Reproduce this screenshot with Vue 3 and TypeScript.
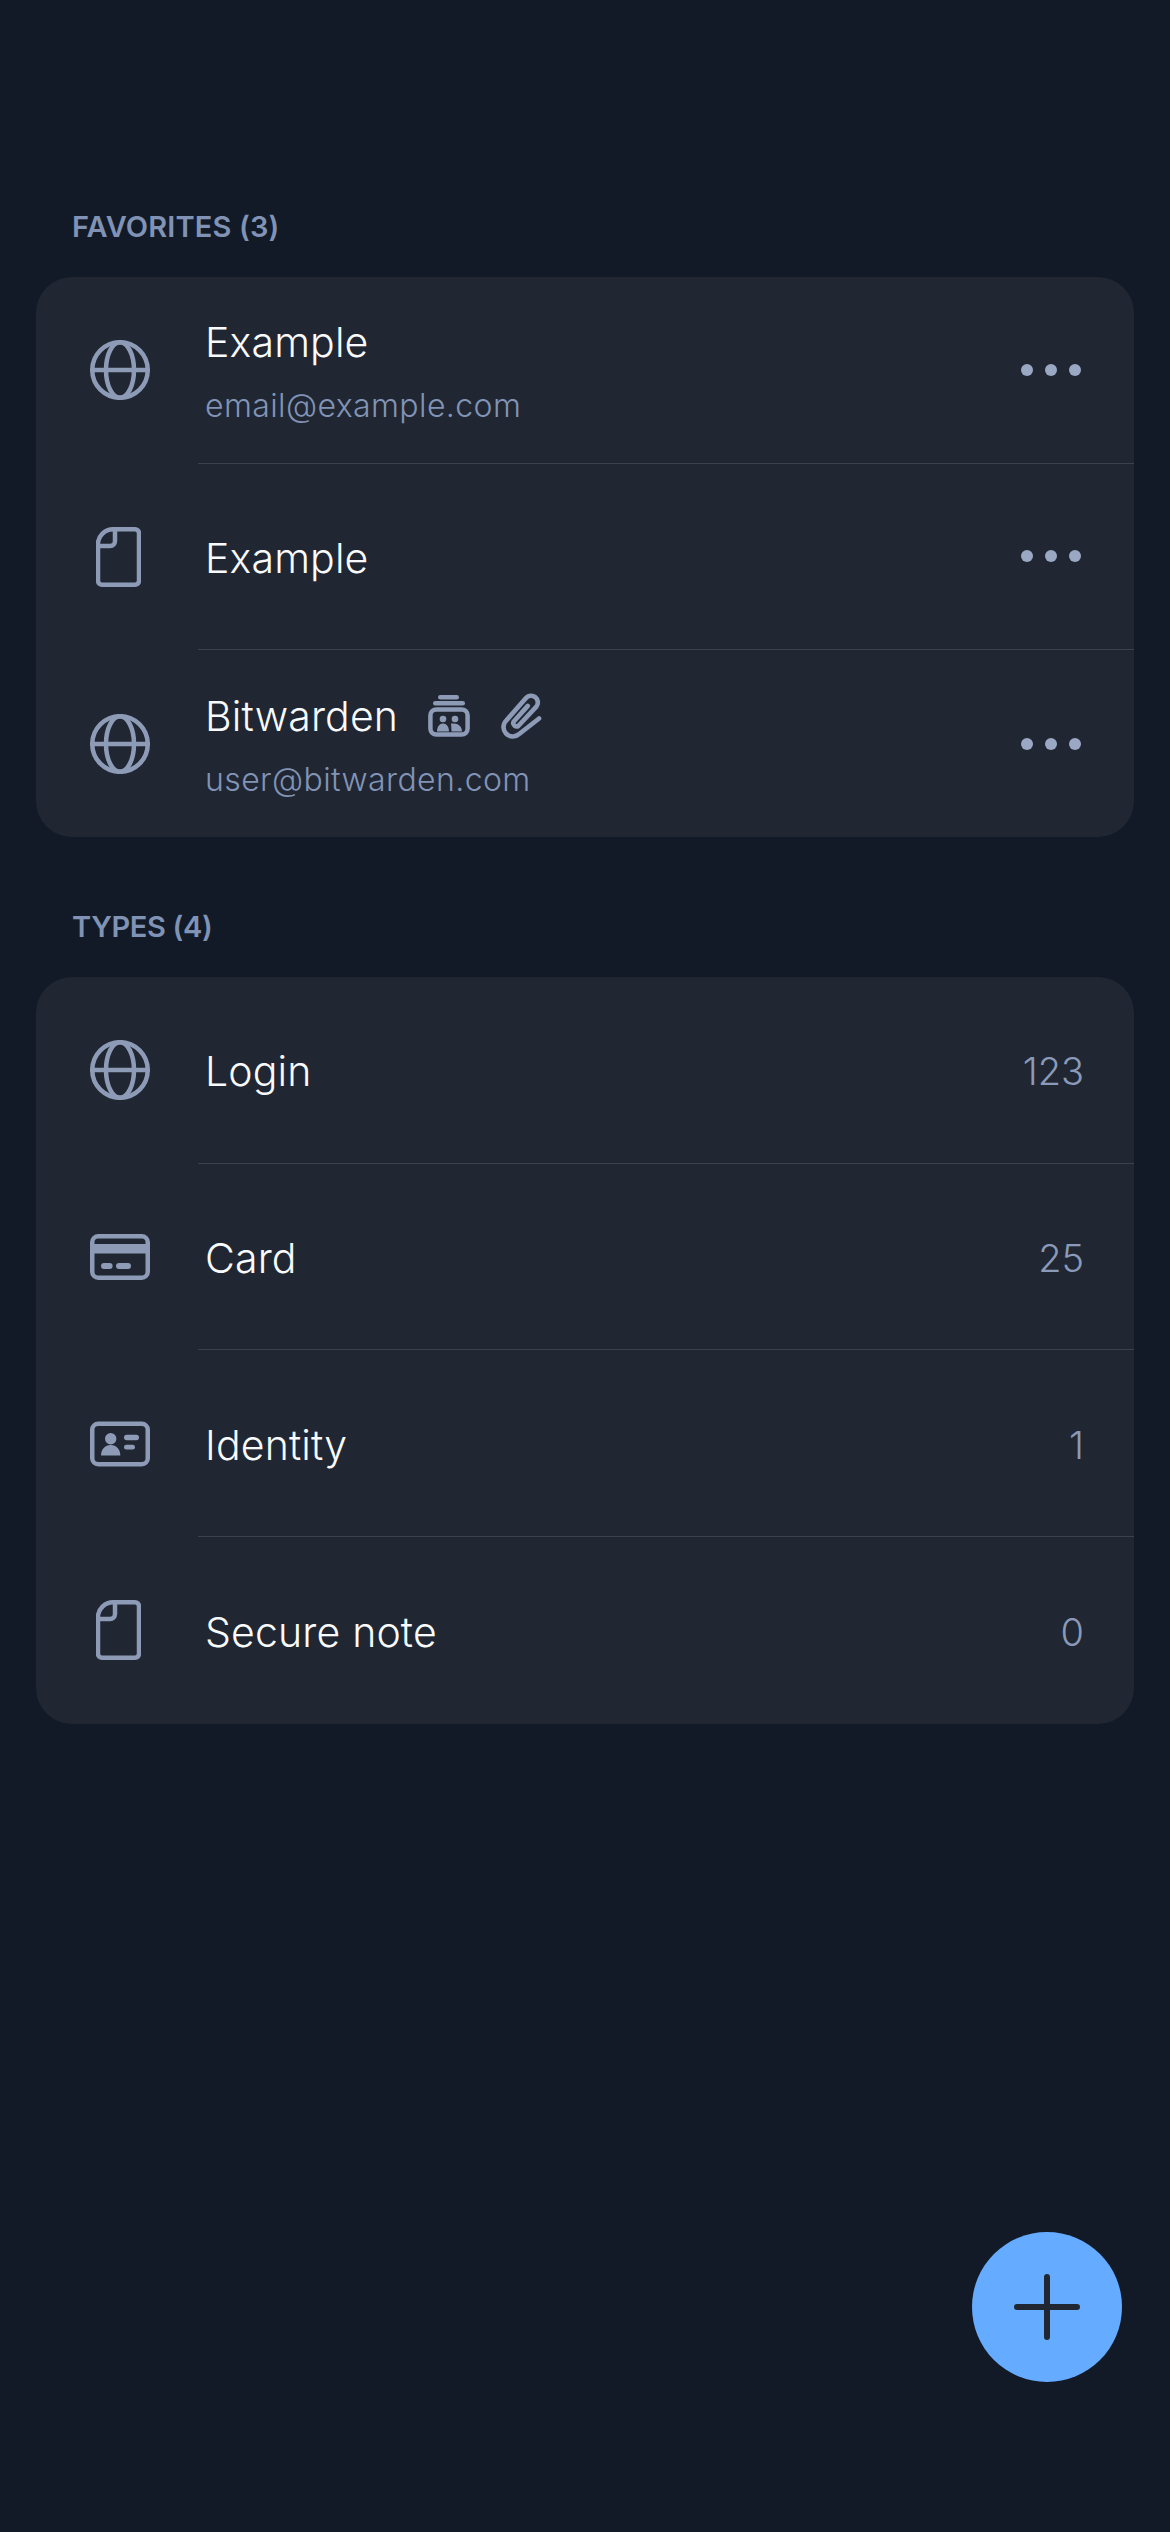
<script setup lang="ts">
type Fav = { icon: string; title: string; sub?: string; extras?: boolean }
type Kind = { icon: string; title: string; count: number }

const favorites: Fav[] = [
  { icon: 'globe', title: 'Example', sub: 'email@example.com' },
  { icon: 'note', title: 'Example' },
  { icon: 'globe', title: 'Bitwarden', sub: 'user@bitwarden.com', extras: true },
]
const kinds: Kind[] = [
  { icon: 'globe', title: 'Login', count: 123 },
  { icon: 'card', title: 'Card', count: 25 },
  { icon: 'id', title: 'Identity', count: 1 },
  { icon: 'note', title: 'Secure note', count: 0 },
]
</script>

<template>
  <div class="page">
    <h2 class="heading">FAVORITES (3)</h2>
    <section class="card">
      <div v-for="(f, i) in favorites" :key="i" class="row">
        <div class="lead">
          <svg v-if="f.icon === 'globe'" class="ic globe" viewBox="0 0 60 60"><circle cx="30" cy="30" r="27.75"/><ellipse cx="30" cy="30" rx="14" ry="27.75"/><path d="M2 30H58"/></svg>
          <svg v-else class="ic note" viewBox="0 0 45 60"><path d="M17 2.25H39a4 4 0 0 1 4 4V53.75a4 4 0 0 1-4 4H6a4 4 0 0 1-4-4V17C2 9 9 2.25 17 2.25Z"/><path d="M19 2.25V14a5 5 0 0 1-5 5H2"/></svg>
        </div>
        <div class="body">
          <div class="text">
            <div class="title-line">
              <span class="title">{{ f.title }}</span>
              <template v-if="f.extras">
                <svg class="badge" viewBox="0 0 42 42"><rect class="solid" x="10" y="0" width="21" height="4.6" rx="2.3"/><rect class="solid" x="5" y="6" width="32" height="4.6" rx="2.3"/><rect x="2.4" y="14.4" width="37.2" height="25.2" rx="6"/><circle class="solid" cx="15" cy="24" r="3.3"/><circle class="solid" cx="27" cy="24" r="3.3"/><path class="solid" d="M9 36.5c0-5 2.6-8 6-8s6 3 6 8Z"/><path class="solid" d="M23 28.6c.6-.1 1.2-.2 2.500-.2 5 0 8.500 3 8.500 8.100H23.500c0-3-.3-5.500-.5-7.900Z"/></svg>
                <svg class="clip" viewBox="295 68 125 142"><path d="M412 148L352 195A28 28 0 0 1 314 153L372 87A20 20 0 0 1 404 112L350 170A10 10 0 0 1 335 158L378 110"/></svg>
              </template>
            </div>
            <div v-if="f.sub" class="sub">{{ f.sub }}</div>
          </div>
          <div class="dots"><i></i><i></i><i></i></div>
        </div>
      </div>
    </section>

    <h2 class="heading second">TYPES (4)</h2>
    <section class="card">
      <div v-for="k in kinds" :key="k.title" class="row">
        <div class="lead">
          <svg v-if="k.icon === 'globe'" class="ic globe" viewBox="0 0 60 60"><circle cx="30" cy="30" r="27.75"/><ellipse cx="30" cy="30" rx="14" ry="27.75"/><path d="M2 30H58"/></svg>
          <svg v-else-if="k.icon === 'card'" class="ic wide" viewBox="0 0 60 46"><rect x="2.25" y="2.25" width="55.5" height="41.5" rx="6"/><rect class="solid" x="2" y="10" width="56" height="9.500"/><rect class="solid" x="11" y="29" width="11.600" height="6" rx="3"/><rect class="solid" x="26" y="29" width="15" height="6" rx="3"/></svg>
          <svg v-else-if="k.icon === 'id'" class="ic wide" viewBox="0 0 60 45"><rect x="2.25" y="2.25" width="55.5" height="40.500" rx="6"/><circle class="solid" cx="20.700" cy="17.300" r="5.700"/><path class="solid" d="M11 34c0-6 4-10.500 9.700-10.500S30.300 28 30.300 34Z"/><rect class="solid" x="34" y="13.300" width="15" height="5.400" rx="2.700"/><rect class="solid" x="34" y="23.300" width="11" height="4.700" rx="2.350"/></svg>
          <svg v-else class="ic note" viewBox="0 0 45 60"><path d="M17 2.25H39a4 4 0 0 1 4 4V53.75a4 4 0 0 1-4 4H6a4 4 0 0 1-4-4V17C2 9 9 2.25 17 2.25Z"/><path d="M19 2.25V14a5 5 0 0 1-5 5H2"/></svg>
        </div>
        <div class="body">
          <div class="text"><span class="title">{{ k.title }}</span></div>
          <span class="count">{{ k.count }}</span>
        </div>
      </div>
    </section>

    <button class="fab" type="button" aria-label="Add">
      <svg viewBox="0 0 66 66"><path d="M3 33H63M33 3V63"/></svg>
    </button>
  </div>
</template>

<style>
html, body { background: #121a27; margin: 0; }
</style>

<style scoped>
.page {
  position: relative;
  box-sizing: border-box;
  width: 1170px;
  height: 2532px;
  padding: 207px 36px 0;
  background: #121a27;
  font-family: Inter, "Liberation Sans", sans-serif;
  overflow: hidden;
}
.heading {
  margin: 0 0 30px;
  padding-left: 36px;
  font-size: 29px;
  line-height: 40px;
  font-weight: 600;
  letter-spacing: 0.15px;
  color: #8093b5;
}
.heading.second { margin-top: 70px; letter-spacing: -0.35px; }
.card {
  background: #202733;
  border-radius: 36px;
  overflow: hidden;
}
.row {
  display: flex;
  height: 186.67px;
}
.lead {
  box-sizing: border-box;
  flex: 0 0 162px;
  padding-left: 54px;
  display: flex;
  align-items: center;
}
.body {
  box-sizing: border-box;
  flex: 1;
  min-width: 0;
  display: flex;
  align-items: center;
  padding: 0 50px 0 7px;
  border-bottom: 1px solid #3b414d;
}
.row:last-child .body { border-bottom: 0; }
.text { flex: 1; min-width: 0; padding-top: 3px; }
.title-line {
  display: flex;
  align-items: center;
}
.title {
  font-size: 41px;
  line-height: 54px;
  font-weight: 300;
  letter-spacing: 0.15px;
  color: #f8fafc;
}
.sub {
  margin-top: 15px;
  font-size: 32px;
  line-height: 44px;
  font-weight: 300;
  letter-spacing: 0.4px;
  color: #8294b6;
}
.count {
  padding-top: 3px;
  font-size: 38px;
  font-weight: 300;
  color: #8a9ab8;
}
.ic, .badge, .clip { display: block; flex: none; }
.ic *, .badge *, .clip * {
  fill: none;
  stroke: #8e9bb6;
  stroke-width: 4.500;
  stroke-linecap: round;
  stroke-linejoin: round;
}
.ic .solid, .badge .solid {
  fill: #8e9bb6;
  stroke: none;
}
.globe { width: 60px; height: 60px; }
.wide { width: 60px; height: 46px; }
.note { width: 45px; height: 60px; margin-left: 6px; }
.badge { width: 42px; height: 42px; margin-left: 30px; }
.clip { width: 42px; height: 47px; margin-left: 30px; }
.clip * { stroke-width: 14; }
.dots {
  display: flex;
  gap: 12px;
  margin-right: 3px;
}
.dots i {
  width: 12px;
  height: 12px;
  border-radius: 50%;
  background: #9aa8c3;
}
.fab {
  position: absolute;
  right: 48px;
  bottom: 150px;
  width: 150px;
  height: 150px;
  padding: 0;
  border: 0;
  border-radius: 50%;
  background: #65abff;
  display: flex;
  align-items: center;
  justify-content: center;
}
.fab svg { width: 66px; height: 66px; }
.fab path {
  fill: none;
  stroke: #202733;
  stroke-width: 6;
  stroke-linecap: round;
}
</style>
